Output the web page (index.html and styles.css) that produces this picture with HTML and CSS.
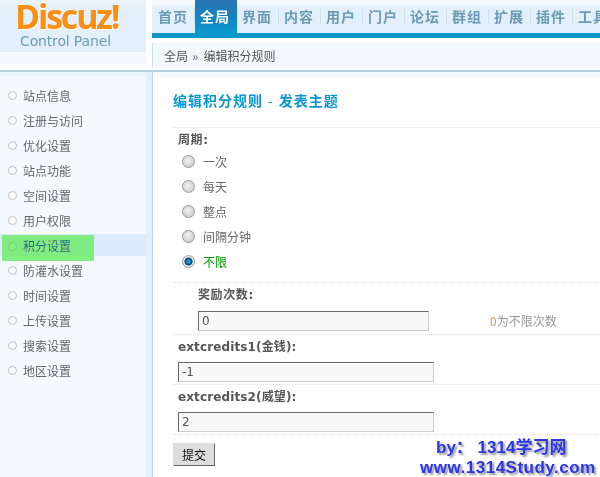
FILE: index.html
```html
<!DOCTYPE html>
<html lang="zh">
<head>
<meta charset="utf-8">
<title>编辑积分规则</title>
<link rel="stylesheet" href="styles.css">
</head>
<body>
<div class="page">
  <header class="header">
    <div class="brand">
      <div class="logo-box">
        <div class="logo">Discuz!</div>
        <div class="cp">Control Panel</div>
      </div>
    </div>
    <div class="top">
      <nav class="nav">
        <a class="tab">首页</a><a class="tab on">全局</a><a class="tab">界面</a><a class="tab">内容</a><a class="tab">用户</a><a class="tab">门户</a><a class="tab">论坛</a><a class="tab">群组</a><a class="tab">扩展</a><a class="tab">插件</a><a class="tab">工具</a>
      </nav>
      <div class="crumb">全局<span class="sep">»</span>编辑积分规则</div>
    </div>
  </header>
  <div class="body">
    <aside class="side">
      <ul class="menu">
        <li>站点信息</li>
        <li>注册与访问</li>
        <li>优化设置</li>
        <li>站点功能</li>
        <li>空间设置</li>
        <li>用户权限</li>
        <li class="active">积分设置<span class="mark"></span></li>
        <li>防灌水设置</li>
        <li>时间设置</li>
        <li>上传设置</li>
        <li>搜索设置</li>
        <li>地区设置</li>
      </ul>
    </aside>
    <main class="main">
      <h1 class="title">编辑积分规则<span class="dash">-</span>发表主题</h1>
      <section class="block first">
        <div class="label zh">周期:</div>
        <label class="radio"><input type="radio" name="cycle">一次</label>
        <label class="radio"><input type="radio" name="cycle">每天</label>
        <label class="radio"><input type="radio" name="cycle">整点</label>
        <label class="radio"><input type="radio" name="cycle">间隔分钟</label>
        <label class="radio sel"><input type="radio" name="cycle" checked>不限</label>
      </section>
      <section class="block sub">
        <div class="label zh">奖励次数:</div>
        <div class="row">
          <input class="field short" type="text" value="0">
          <span class="hint"><span class="zero">0</span>为不限次数</span>
        </div>
      </section>
      <section class="block credit">
        <div class="label">extcredits1(金钱):</div>
        <input class="field" type="text" value="-1">
      </section>
      <section class="block credit">
        <div class="label">extcredits2(威望):</div>
        <input class="field" type="text" value="2">
      </section>
      <div class="submit"><button class="btn" type="button">提交</button></div>
    </main>
  </div>
  <div class="wm">
    <div class="wm1">by&#xFF1A; 1314学习网</div>
    <div class="wm2">www.1314Study.com</div>
  </div>
</div>
</body>
</html>
```

FILE: styles.css
```css
* { box-sizing: border-box; }
html, body { margin: 0; padding: 0; overflow: hidden; background: #fff; }
body { width: 600px; height: 477px; font: 12px/1 Tahoma, "DejaVu Sans", "Noto Sans CJK SC", sans-serif; color: #666; }
.page { position: relative; width: 600px; height: 477px; overflow: hidden; }

.header { display: grid; grid-template-columns: 146px 1fr; height: 72px; border-bottom: 2px solid #b6d0e0; background: #fcfeff; }
.brand { padding-bottom: 14px; background: linear-gradient(#fcfeff 52px, #f3f9fd 53px, #f3f9fd 66px, #fcfeff 67px); }
.logo-box { height: 52px; padding-left: 15px; background: linear-gradient(#eaf4fb, #e3effa 12px); }
.logo { font: bold 34px/32px "Open Sans", "Liberation Sans", sans-serif; letter-spacing: -2.2px; color: #fb8f14; text-shadow: 1px 1px 0 #fff; }
.cp { font: 14px/16px "DejaVu Sans", sans-serif; color: #6d9db5; letter-spacing: -0.15px; margin: 1px 0 0 5px; }

.top { display: flex; flex-direction: column; min-width: 0; }
.nav { display: flex; height: 38px; margin-left: 6px; background: linear-gradient(#f3f9fd 0 3px, #e3effa 8px); border-bottom: 5px solid #0a97cc; padding-left: 1px; overflow: hidden; white-space: nowrap; }
.tab { flex: 0 0 42px; height: 33px; font: bold 14px/33px "Noto Sans CJK SC", sans-serif; letter-spacing: 1px; color: #6a9bb2; padding-left: 5px; position: relative; }
.tab::after { content: ""; position: absolute; right: 0; top: 9px; height: 15px; width: 1px; background: #cfdfe9; }
.tab.on { color: #fff; background: linear-gradient(#2b74b3, #1384bf 55%, #0d9ad0); }
.tab.on::after { display: none; }
.crumb { margin: 5px 0 0 6px; height: 25px; background: #f2f9fd; border-left: 1px solid #c8dfec; font: 12px/25px "Noto Sans CJK SC", sans-serif; color: #555; padding-left: 11px; }
.sep { color: #7a8ba0; font-weight: bold; margin: 0 5px 0 4px; }

.body { display: grid; grid-template-columns: 153px 1fr; height: 405px; }
.side { padding: 4px 6px 0 0; border-right: 1px solid #b9d8ea; background: #f3f9fd; box-shadow: inset -6px 0 0 #e3effa, inset 0 4px 0 #eaf4fb; }
.menu { list-style: none; margin: 7px 0 0; padding: 0; }
.menu li { position: relative; height: 25px; padding-left: 23px; font: 12px/25px "Noto Sans CJK SC", sans-serif; color: #666; }
.menu li::before { content: ""; position: absolute; left: 8px; top: 8px; width: 7px; height: 7px; border-radius: 50%; background: #fff; border: 1px solid #b9bfc4; }
.menu .active { background: #dcebfa; color: #0a6a9c; height: 22px; margin: 1px 0 2px; line-height: 23px; }
.mark { position: absolute; left: 2px; top: 1px; width: 92px; height: 26px; background: #80f080; mix-blend-mode: darken; }

.main { min-width: 0; padding-left: 20px; border-top: 5px solid #f3f9fd; }
.title { margin: 0; height: 50px; font: bold 14px/46px "Noto Sans CJK SC", sans-serif; letter-spacing: 1px; color: #0a97cc; }
.dash { font-weight: normal; margin: 0 5px; }
.block { border-top: 1px dotted #cfe8fb; padding: 6px 0 3px 5px; }
.label { font: bold 12px/13px Tahoma, "DejaVu Sans", "Noto Sans CJK SC", sans-serif; letter-spacing: .12px; color: #555; margin-bottom: 8px; }
.label.zh { letter-spacing: .6px; }
.first { height: 155px; }
.first .label { margin-bottom: 2px; }
.radio { display: flex; align-items: center; gap: 8px; height: 25px; margin-left: 4px; font: 12px/25px "Noto Sans CJK SC", sans-serif; color: #666; }
.radio input { appearance: none; margin: 0; width: 13px; height: 13px; border-radius: 50%; border: 1px solid #9a9a9a; background: radial-gradient(circle at 45% 40%, #f0f0f0, #c4c4c4); }
.radio input:checked { background: radial-gradient(circle, #1f8fd0 0 1.5px, #0b3f78 3.5px, #e8e8e8 4.5px); }
.radio.sel { color: #090; }
.sub { padding-left: 25px; height: 52px; }
.sub .label { margin-bottom: 9px; }
.row { display: flex; align-items: center; }
.field { display: block; width: 256px; height: 20px; padding: 0 3px; border: 1px solid #ccc; border-top-color: #666; border-left-color: #666; background: #f8f8f8; font: 12px/18px Tahoma, "DejaVu Sans", sans-serif; color: #555; border-radius: 0; outline: 0; }
.field.short { width: 231px; }
.credit { height: 50px; }
.hint { margin-left: 61px; font: 12px/20px "Noto Sans CJK SC", sans-serif; color: #999; }
.zero { color: #c96; }
.submit { border-top: 1px dotted #cfe8fb; padding-top: 8px; }
.btn { display: block; width: 42px; height: 23px; padding: 0; border: 1px solid #aaa; border-right-color: #666; border-bottom-color: #666; border-top-color: #ddd; border-left-color: #ddd; background: #ddd; font: 12px/21px "Noto Sans CJK SC", sans-serif; color: #111; }

.wm { position: absolute; left: 420px; top: 438px; width: 180px; font: bold 17px/20px "Liberation Sans", "Noto Sans CJK SC", sans-serif; color: #2a35e8; text-shadow: 2px 2px 2px #999; white-space: nowrap; }
.wm1 { padding-left: 16px; }
.wm2 { letter-spacing: .5px; }
```
